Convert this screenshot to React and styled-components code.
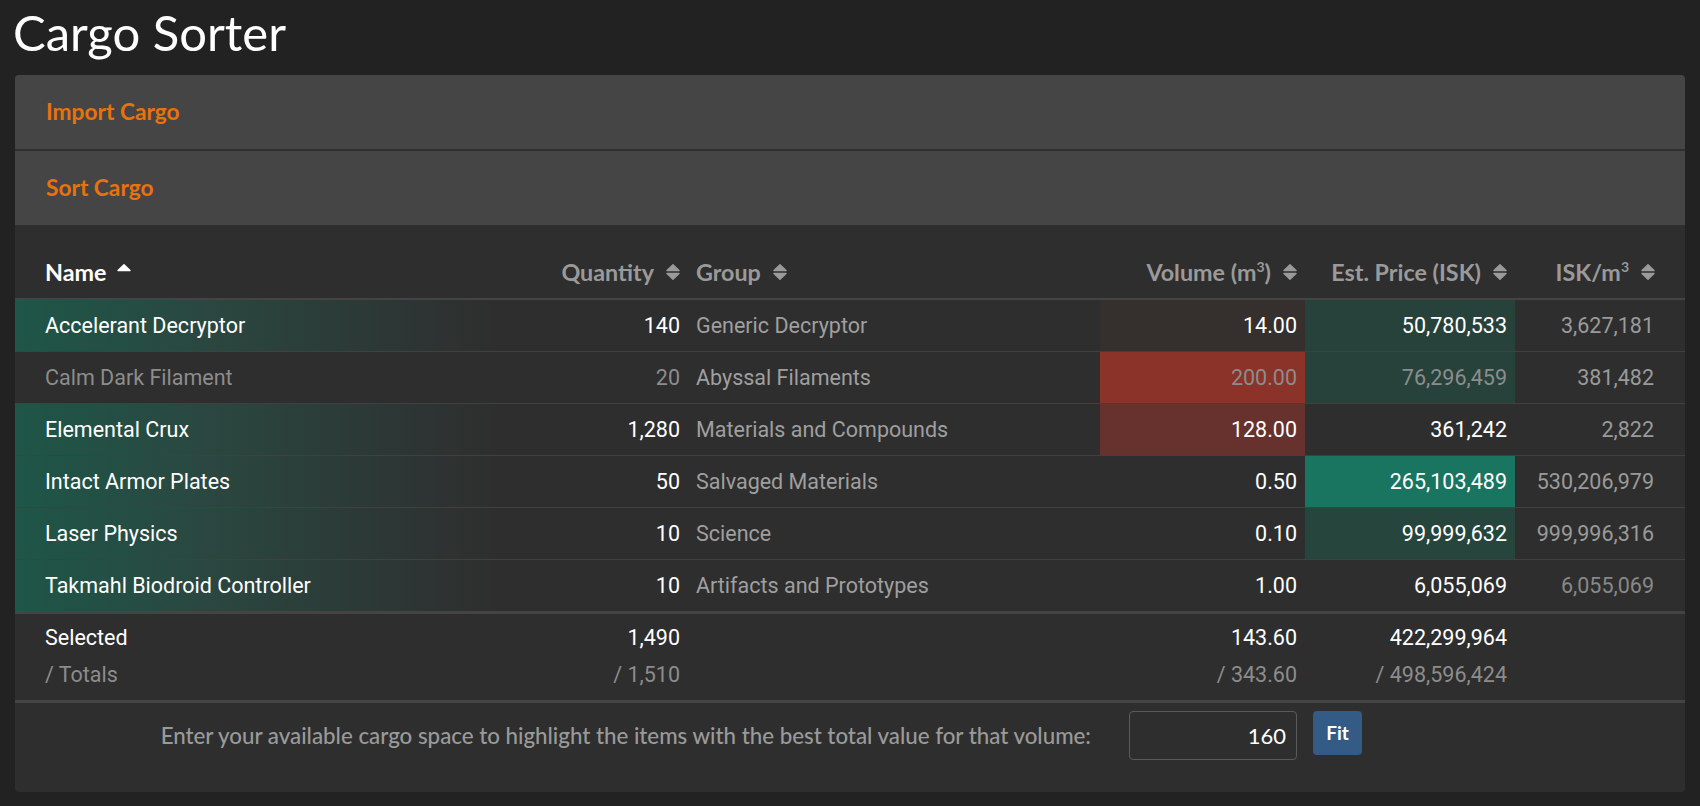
import React from "react";
import styled, { createGlobalStyle } from "styled-components";

const GlobalStyle = createGlobalStyle`
  html, body { margin: 0; padding: 0; background: #222222; }
  body { font-family: Lato, "Open Sans", sans-serif; color: #fff; }
  * { box-sizing: border-box; }
`;

const COLS = "545px 128px 412px 205px 210px 1fr";

const Page = styled.div`
  padding: 0 15px 14px 15px;
`;

const Title = styled.h1`
  margin: 0 0 13px -2px;
  padding-top: 3px;
  font-family: Lato, sans-serif;
  font-weight: 400;
  font-size: 49px;
  line-height: 1.2;
  color: #ffffff;
`;

const Panel = styled.section`
  background: #2e2e2e;
  border-radius: 4px;
  overflow: hidden;
`;

const AccordionHeader = styled.div`
  height: ${(p) => (p.$divider ? "76px" : "74px")};
  display: flex;
  align-items: center;
  padding: 0 31px;
  background: #454545;
  color: #e8720c;
  font-family: Lato, sans-serif;
  font-weight: 700;
  font-size: 22.7px;
  border-bottom: ${(p) => (p.$divider ? "2px solid #303030" : "none")};
`;

const TableArea = styled.div`
  padding-top: 22px;
`;

const HeaderRow = styled.div`
  display: grid;
  grid-template-columns: ${COLS};
  height: 53px;
  border-bottom: 2px solid #444444;
`;

const HeaderCell = styled.div`
  display: flex;
  align-items: center;
  justify-content: ${(p) => (p.$right ? "flex-end" : "flex-start")};
  gap: ${(p) => (p.$active ? "11px" : "12px")};
  padding: 0 8px;
  font-family: Lato, sans-serif;
  font-weight: 700;
  font-size: 23.3px;
  color: ${(p) => (p.$active ? "#ffffff" : "#9a9a9a")};
  &:first-child { padding-left: 30px; }
  &:last-child { padding-right: 30px; }
  sup { font-size: 14px; line-height: 0; position: relative; top: -1px; vertical-align: super; }
`;

const SortSvg = styled.svg`
  display: block;
  flex: none;
  width: 14px;
  height: 16px;
  fill: ${(p) => (p.$active ? "#ffffff" : "#9a9a9a")};
  stroke: ${(p) => (p.$active ? "#ffffff" : "#9a9a9a")};
  stroke-width: 1.4;
  stroke-linejoin: round;
`;

function SortIcon({ active }) {
  return (
    <SortSvg $active={active} viewBox="0 0 14 16" aria-hidden="true">
      <polygon points="1,6.6 7,0.8 13,6.6" />
      {!active && <polygon points="1,9.4 13,9.4 7,15.2" />}
    </SortSvg>
  );
}

const Row = styled.div`
  display: grid;
  grid-template-columns: ${COLS};
  height: ${(p) => (p.$last ? "54px" : "52px")};
  border-bottom: ${(p) => (p.$last ? "3px solid #444444" : "1px solid #404040")};
`;

const Cell = styled.div`
  display: flex;
  align-items: center;
  justify-content: ${(p) => (p.$right ? "flex-end" : "flex-start")};
  padding: 0 8px;
  font-family: Roboto, "Open Sans", sans-serif;
  font-size: 21.5px;
  white-space: nowrap;
  color: ${(p) => p.$color || "#ffffff"};
  background: ${(p) => p.$bg || "transparent"};
  &:first-child { padding-left: 30px; }
  &:last-child { padding-right: 31px; }
`;

const FooterRow = styled.div`
  display: grid;
  grid-template-columns: ${COLS};
  padding: 5px 0 7px;
  border-bottom: 3px solid #444444;
`;

const FooterCell = styled.div`
  display: flex;
  flex-direction: column;
  align-items: ${(p) => (p.$right ? "flex-end" : "flex-start")};
  padding: 0 8px;
  font-family: Roboto, "Open Sans", sans-serif;
  font-size: 21.5px;
  &:first-child { padding-left: 30px; }
`;

const Line = styled.div`
  height: 37px;
  line-height: 37px;
  color: ${(p) => (p.$muted ? "#8c8c8c" : "#ffffff")};
`;

const FitRow = styled.div`
  display: grid;
  grid-template-columns: 1076px 168px 49px;
  column-gap: 38px;
  align-items: start;
  padding: 8px 0 32px;
  & > :last-child { margin-left: -22px; }
`;

const FitLabel = styled.div`
  text-align: right;
  line-height: 49px;
  font-family: Lato, sans-serif;
  font-weight: 500;
  font-size: 22.3px;
  white-space: nowrap;
  color: #9a9a9a;
`;

const NumberInput = styled.input`
  width: 168px;
  height: 49px;
  padding: 0 10px;
  background: #2e2e2e;
  border: 1px solid #5a5a5a;
  border-radius: 4px;
  color: #ffffff;
  text-align: right;
  font-family: Lato, sans-serif;
  font-size: 22px;
  outline: none;
`;

const FitButton = styled.button`
  width: 49px;
  height: 44px;
  border: none;
  border-radius: 4px;
  background: #335b85;
  color: #ffffff;
  font-family: Lato, sans-serif;
  font-weight: 700;
  font-size: 19px;
  padding: 0;
`;

const NAME_BG = "linear-gradient(90deg, #1e5648 0%, #2a4740 35%, #2e2e2e 88%)";
const PRICE_MID = "#27423b";
const PRICE_HI = "#1a7560";

const rows = [
  { name: "Accelerant Decryptor", qty: "140", group: "Generic Decryptor", vol: "14.00", price: "50,780,533", isk: "3,627,181", sel: true, volBg: "#352f2d", priceBg: PRICE_MID },
  { name: "Calm Dark Filament", qty: "20", group: "Abyssal Filaments", vol: "200.00", price: "76,296,459", isk: "381,482", sel: false, volBg: "#8b3229", priceBg: PRICE_MID },
  { name: "Elemental Crux", qty: "1,280", group: "Materials and Compounds", vol: "128.00", price: "361,242", isk: "2,822", sel: true, volBg: "#67322d" },
  { name: "Intact Armor Plates", qty: "50", group: "Salvaged Materials", vol: "0.50", price: "265,103,489", isk: "530,206,979", sel: true, priceBg: PRICE_HI },
  { name: "Laser Physics", qty: "10", group: "Science", vol: "0.10", price: "99,999,632", isk: "999,996,316", sel: true, priceBg: "#26453d" },
  { name: "Takmahl Biodroid Controller", qty: "10", group: "Artifacts and Prototypes", vol: "1.00", price: "6,055,069", isk: "6,055,069", sel: true, iskColor: "#888888" },
];

const headers = [
  { label: "Name", active: true },
  { label: "Quantity", right: true },
  { label: "Group" },
  { label: <>Volume (m<sup>3</sup>)</>, right: true },
  { label: "Est. Price (ISK)", right: true },
  { label: <>ISK/m<sup>3</sup></>, right: true },
];

export default function App() {
  return (
    <>
      <GlobalStyle />
      <Page>
        <Title>Cargo Sorter</Title>
        <Panel>
          <AccordionHeader $divider>Import Cargo</AccordionHeader>
          <AccordionHeader>Sort Cargo</AccordionHeader>
          <TableArea>
            <HeaderRow>
              {headers.map((h, i) => (
                <HeaderCell key={i} $right={h.right} $active={h.active}>
                  <span>{h.label}</span>
                  <SortIcon active={h.active} />
                </HeaderCell>
              ))}
            </HeaderRow>
            {rows.map((r, i) => {
              const main = r.sel ? "#ffffff" : "#8c8c8c";
              return (
                <Row key={r.name} $last={i === rows.length - 1}>
                  <Cell $bg={r.sel ? NAME_BG : undefined} $color={main}>{r.name}</Cell>
                  <Cell $right $color={main}>{r.qty}</Cell>
                  <Cell $color="#9f9f9f">{r.group}</Cell>
                  <Cell $right $bg={r.volBg} $color={main}>{r.vol}</Cell>
                  <Cell $right $bg={r.priceBg} $color={main}>{r.price}</Cell>
                  <Cell $right $color={r.iskColor || "#9a9a9a"}>{r.isk}</Cell>
                </Row>
              );
            })}
            <FooterRow>
              <FooterCell>
                <Line>Selected</Line>
                <Line $muted>/ Totals</Line>
              </FooterCell>
              <FooterCell $right>
                <Line>1,490</Line>
                <Line $muted>/ 1,510</Line>
              </FooterCell>
              <FooterCell />
              <FooterCell $right>
                <Line>143.60</Line>
                <Line $muted>/ 343.60</Line>
              </FooterCell>
              <FooterCell $right>
                <Line>422,299,964</Line>
                <Line $muted>/ 498,596,424</Line>
              </FooterCell>
              <FooterCell />
            </FooterRow>
            <FitRow>
              <FitLabel>Enter your available cargo space to highlight the items with the best total value for that volume:</FitLabel>
              <NumberInput type="text" defaultValue="160" />
              <FitButton type="button">Fit</FitButton>
            </FitRow>
          </TableArea>
        </Panel>
      </Page>
    </>
  );
}
